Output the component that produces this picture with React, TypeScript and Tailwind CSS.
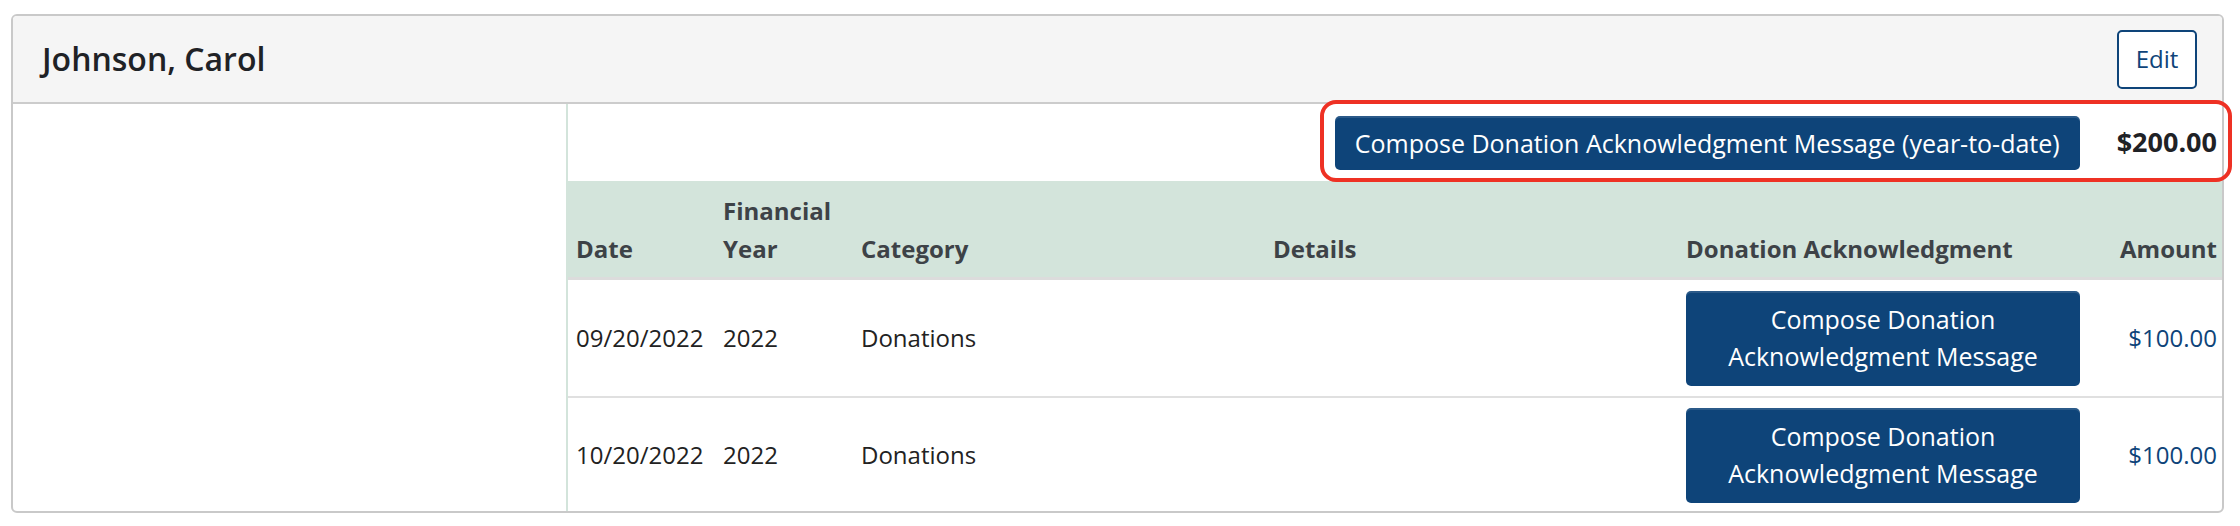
import React from "react";

const rows = [
  { date: "09/20/2022", year: "2022", category: "Donations", amount: "$100.00" },
  { date: "10/20/2022", year: "2022", category: "Donations", amount: "$100.00" },
];

const cols = "grid grid-cols-[145px_138px_412px_413px_414px_132px]";

export default function App() {
  return (
    <div className="relative w-[2240px] h-[526px] bg-white pt-[14px] pl-[11px] font-['Open_Sans',sans-serif] text-[24px] text-[#222222]">
      <div className="flex flex-col w-[2213px] h-[499px] border-2 border-[#c9c9c9] rounded-[6px] overflow-hidden">
        <div className="flex items-center justify-between h-[88px] shrink-0 bg-[#f5f5f5] border-b-2 border-[#cccccc] pl-[29px] pr-[25px]">
          <h2 className="text-[32px] font-semibold text-[#1f2226] leading-none">Johnson, Carol</h2>
          <button className="w-[80px] h-[59px] border-2 border-[#0e4479] rounded-[5px] bg-white text-[24px] text-[#0e4479]">
            Edit
          </button>
        </div>
        <div className="flex flex-1">
          <div className="w-[555px] shrink-0 border-r-2 border-[#d3e4db]" />
          <div className="flex flex-col flex-1">
            <div className="flex items-center justify-end gap-[37px] h-[77px] shrink-0 pr-[5px]">
              <button className="h-[54px] px-[20px] rounded-[5px] bg-[#0e4479] text-white text-[25px] leading-[38px] shadow-[inset_0_2px_0_rgba(255,255,255,0.12)]">
                Compose Donation Acknowledgment Message (year-to-date)
              </button>
              <span className="text-[27px] font-bold text-[#1f2226]">$200.00</span>
            </div>
            <div className={`${cols} h-[99px] shrink-0 bg-[#d3e4db] border-b-[3px] border-[#dcdcdc] font-bold text-[#3d4247] leading-[38px]`}>
              <div className="flex items-end pl-[8px] pb-[9px]">Date</div>
              <div className="flex items-end pl-[10px] pb-[9px]">Financial Year</div>
              <div className="flex items-end pl-[10px] pb-[9px]">Category</div>
              <div className="flex items-end pl-[10px] pb-[9px]">Details</div>
              <div className="flex items-end pl-[10px] pb-[9px]">Donation Acknowledgment</div>
              <div className="flex items-end justify-end pr-[5px] pb-[9px]">Amount</div>
            </div>
            {rows.map((r, i) => (
              <div
                key={i}
                className={`${cols} h-[116px] shrink-0 items-center ${i > 0 ? "border-t-2 border-[#e0e0e0]" : ""}`}
              >
                <div className="pl-[8px]">{r.date}</div>
                <div className="pl-[10px]">{r.year}</div>
                <div className="pl-[10px]">{r.category}</div>
                <div className="pl-[10px]" />
                <div className="pl-[10px] pr-[10px]">
                  <button className="w-full h-[95px] rounded-[5px] bg-[#0e4479] text-white text-[25px] leading-[37px] px-[16px] shadow-[inset_0_2px_0_rgba(255,255,255,0.12)]">
                    Compose Donation Acknowledgment Message
                  </button>
                </div>
                <div className="text-right pr-[5px] text-[#0e4479]">{r.amount}</div>
              </div>
            ))}
          </div>
        </div>
      </div>
      <div className="absolute left-[1320px] top-[100px] w-[912px] h-[82px] border-4 border-[#ee3124] rounded-[16px] pointer-events-none" />
    </div>
  );
}
